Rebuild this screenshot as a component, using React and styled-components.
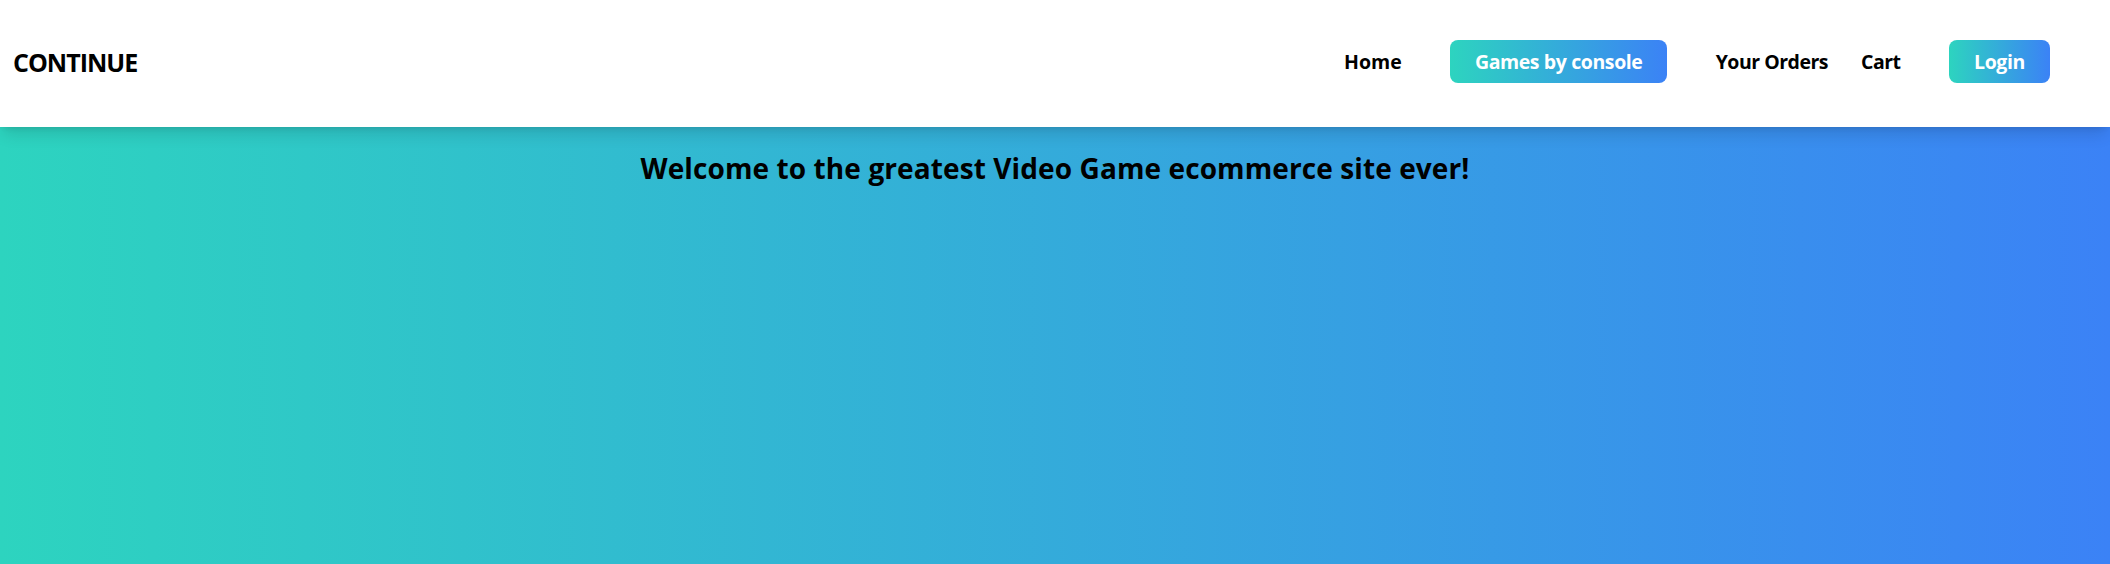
import React from "react";
import styled, { createGlobalStyle } from "styled-components";

const GlobalStyle = createGlobalStyle`
  html, body { margin: 0; padding: 0; }
  body {
    font-family: "Open Sans", "Noto Sans", sans-serif;
    color: #000;
  }
  * { box-sizing: border-box; }
`;

const Page = styled.div`
  display: flex;
  flex-direction: column;
  min-height: 564px;
  background: linear-gradient(to right, #2dd4bf, #3b82f6);
`;

const Header = styled.header`
  position: relative;
  z-index: 1;
  height: 127px;
  background: #fff;
  display: flex;
  align-items: center;
  justify-content: space-between;
  padding: 0 28px 4px 13px;
  box-shadow: 0 10px 15px -3px rgba(0, 0, 0, 0.12), 0 4px 6px -4px rgba(0, 0, 0, 0.12);
`;

const Brand = styled.div`
  font-size: 25px;
  font-weight: 700;
  letter-spacing: -1px;
  margin-top: 1px;
`;

const Nav = styled.nav`
  display: flex;
  align-items: center;
`;

const NavLink = styled.a`
  font-size: 19.5px;
  font-weight: 700;
  letter-spacing: ${(p) => p.$ls ?? -0.5}px;
  padding: 0 16.5px;
  color: #000;
  text-decoration: none;
  cursor: pointer;
`;

const NavButton = styled.a`
  display: flex;
  align-items: center;
  justify-content: center;
  height: 43px;
  width: ${(p) => p.$width}px;
  margin: 0 32px;
  border-radius: 8px;
  background: linear-gradient(to right, #2dd4bf, #3b82f6);
  color: #fff;
  font-size: 19.5px;
  font-weight: 700;
  letter-spacing: -0.4px;
  text-decoration: none;
  cursor: pointer;
`;

const Main = styled.main`
  flex: 1;
  display: flex;
  flex-direction: column;
  align-items: center;
`;

const Title = styled.h1`
  margin: 23px 0 0;
  font-size: 28px;
  font-weight: 700;
  letter-spacing: 0.1px;
  line-height: 1.3;
`;

export default function App() {
  return (
    <>
      <GlobalStyle />
      <Page>
        <Header>
          <Brand>CONTINUE</Brand>
          <Nav>
            <NavLink $ls={0}>Home</NavLink>
            <NavButton $width={217}>Games by console</NavButton>
            <NavLink>Your Orders</NavLink>
            <NavLink>Cart</NavLink>
            <NavButton $width={101}>Login</NavButton>
          </Nav>
        </Header>
        <Main>
          <Title>Welcome to the greatest Video Game ecommerce site ever!</Title>
        </Main>
      </Page>
    </>
  );
}
